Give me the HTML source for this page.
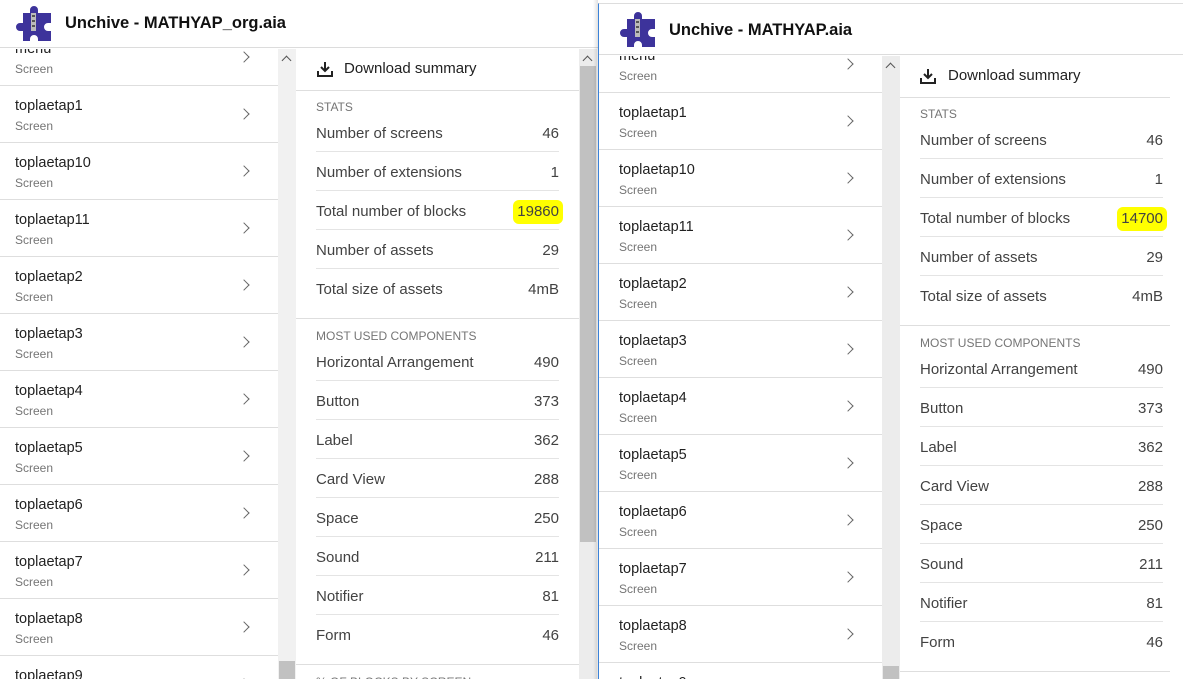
<!DOCTYPE html>
<html><head><meta charset="utf-8"><style>
*{margin:0;padding:0;box-sizing:border-box}
body{width:1183px;height:679px;overflow:hidden;background:#fff;font-family:"Liberation Sans",Roboto,sans-serif;position:relative}
.win{position:absolute;background:#fff;overflow:hidden}
.hdr{position:absolute;left:0;top:0;right:0;height:48px;border-bottom:1px solid #dcdcdc;background:#fff}
.hdr .t{position:absolute;left:65px;top:14px;font-size:16.5px;font-weight:bold;color:#111}
.hdr svg{position:absolute;left:15px;top:4px}
.list{position:absolute;left:0;width:278px;top:49px;bottom:0;overflow:hidden}
.row{position:absolute;left:0;width:278px;height:57px;border-bottom:1px solid #dedede}
.row .a{position:absolute;left:15px;top:12px;font-size:14.5px;color:#212121}
.row .b{position:absolute;left:15px;top:33px;font-size:12px;color:#757575}
.row .c{position:absolute;left:240px;top:24px;width:8px;height:8px;border-right:1.6px solid #666;border-top:1.6px solid #666;transform:rotate(45deg)}
.sb{position:absolute;width:18px;background:#f1f1f1}
.sb .up{position:absolute;left:5px;top:8px;width:7px;height:7px;border-left:1.6px solid #555;border-top:1.6px solid #555;transform:rotate(45deg)}
.thumb{position:absolute;left:1px;right:1px;background:#c1c1c1}
.panel{position:absolute;left:296px;top:49px;width:283px;bottom:0;overflow:hidden}
.dl{position:absolute;left:0;right:0;top:0;height:42px;border-bottom:1px solid #dedede}
.dl span{position:absolute;left:48px;top:11px;font-size:15px;color:#212121}
.lab{position:absolute;left:20px;font-size:12px;color:#757575}
.sr{position:absolute;left:20px;width:243px;height:39px;border-bottom:1px solid #e4e4e4;font-size:15px;color:#424242}
.sr.l{border-bottom:none}
.sr > span{position:absolute;top:12px}
.sr > .v{right:0}
.sec{position:absolute;left:0;right:0;border-bottom:1px solid #dedede}
.hl{background:#ffff00;border-radius:6px;padding:3px 4px 4px;margin-right:-4px}
</style></head><body>

<!-- LEFT WINDOW -->
<div class="win" style="left:0;top:0;width:598px;height:679px">
 <div class="hdr">
  <svg width="40" height="40" viewBox="0 0 40 40"><path d="M2 9h13v-3a4 4 0 0 1 8 0v3h13v10h-3a4 4 0 0 0 0 8h3v10H23v-2a4 4 0 0 0-8 0v2H8V27H5a4 4 0 0 1 0-8h3V9z" fill="#3d339b"/><rect x="16" y="9" width="5" height="18" fill="#bbb"/><rect x="17" y="11" width="3" height="2" fill="#555"/><rect x="17" y="16" width="3" height="2" fill="#555"/><rect x="17" y="21" width="3" height="2" fill="#555"/></svg>
  <div class="t">Unchive - MATHYAP_org.aia</div>
 </div>
 <div class="list">
  <div class="row" style="top:-20px"><div class="a">menu</div><div class="b">Screen</div><div class="c"></div></div>
  <div class="row" style="top:37px"><div class="a">toplaetap1</div><div class="b">Screen</div><div class="c"></div></div>
  <div class="row" style="top:94px"><div class="a">toplaetap10</div><div class="b">Screen</div><div class="c"></div></div>
  <div class="row" style="top:151px"><div class="a">toplaetap11</div><div class="b">Screen</div><div class="c"></div></div>
  <div class="row" style="top:208px"><div class="a">toplaetap2</div><div class="b">Screen</div><div class="c"></div></div>
  <div class="row" style="top:265px"><div class="a">toplaetap3</div><div class="b">Screen</div><div class="c"></div></div>
  <div class="row" style="top:322px"><div class="a">toplaetap4</div><div class="b">Screen</div><div class="c"></div></div>
  <div class="row" style="top:379px"><div class="a">toplaetap5</div><div class="b">Screen</div><div class="c"></div></div>
  <div class="row" style="top:436px"><div class="a">toplaetap6</div><div class="b">Screen</div><div class="c"></div></div>
  <div class="row" style="top:493px"><div class="a">toplaetap7</div><div class="b">Screen</div><div class="c"></div></div>
  <div class="row" style="top:550px"><div class="a">toplaetap8</div><div class="b">Screen</div><div class="c"></div></div>
  <div class="row" style="top:607px"><div class="a">toplaetap9</div><div class="b">Screen</div><div class="c"></div></div>
 </div>
 <div class="sb" style="left:278px;top:49px;height:630px"><div class="up"></div><div class="thumb" style="top:612px;height:20px"></div></div>
 <div class="panel">
  <div class="dl"><svg style="position:absolute;left:21px;top:12px" width="16" height="16" viewBox="0 0 16 16"><path d="M8 1v9M4 6l4 4 4-4M1 10v5h14v-5" fill="none" stroke="#222" stroke-width="2"/></svg><span>Download summary</span></div>
  <div class="lab" style="top:51px">STATS</div>
  <div class="sr" style="top:64px"><span>Number of screens</span><span class="v">46</span></div>
  <div class="sr" style="top:103px"><span>Number of extensions</span><span class="v">1</span></div>
  <div class="sr" style="top:142px"><span>Total number of blocks</span><span class="v"><span class="hl">19860</span></span></div>
  <div class="sr" style="top:181px"><span>Number of assets</span><span class="v">29</span></div>
  <div class="sr l" style="top:220px"><span>Total size of assets</span><span class="v">4mB</span></div>
  <div class="sec" style="top:269px"></div>
  <div class="lab" style="top:280px">MOST USED COMPONENTS</div>
  <div class="sr" style="top:293px"><span>Horizontal Arrangement</span><span class="v">490</span></div>
  <div class="sr" style="top:332px"><span>Button</span><span class="v">373</span></div>
  <div class="sr" style="top:371px"><span>Label</span><span class="v">362</span></div>
  <div class="sr" style="top:410px"><span>Card View</span><span class="v">288</span></div>
  <div class="sr" style="top:449px"><span>Space</span><span class="v">250</span></div>
  <div class="sr" style="top:488px"><span>Sound</span><span class="v">211</span></div>
  <div class="sr" style="top:527px"><span>Notifier</span><span class="v">81</span></div>
  <div class="sr l" style="top:566px"><span>Form</span><span class="v">46</span></div>
  <div class="sec" style="top:615px"></div>
  <div class="lab" style="top:626px">% OF BLOCKS BY SCREEN</div>
 </div>
 <div class="sb" style="left:579px;top:49px;height:630px;background:#ececec"><div class="up"></div><div class="thumb" style="top:17px;height:476px"></div></div>
</div>
<div style="position:absolute;left:593px;top:0;width:5px;height:679px;background:linear-gradient(90deg,rgba(0,0,0,0),rgba(0,0,0,.12))"></div>

<!-- RIGHT WINDOW -->
<div class="win" style="left:598px;top:3px;width:585px;height:676px;border-left:1px solid #3b82d8;border-top:1px solid #ddd">
 <div style="position:absolute;left:0;top:0;width:584px;height:676px">
 <div class="hdr" style="height:51px"><svg style="left:20px;top:6px" width="40" height="40" viewBox="0 0 40 40"><path d="M2 9h13v-3a4 4 0 0 1 8 0v3h13v10h-3a4 4 0 0 0 0 8h3v10H23v-2a4 4 0 0 0-8 0v2H8V27H5a4 4 0 0 1 0-8h3V9z" fill="#3d339b"/><rect x="16" y="9" width="5" height="18" fill="#bbb"/><rect x="17" y="11" width="3" height="2" fill="#555"/><rect x="17" y="16" width="3" height="2" fill="#555"/><rect x="17" y="21" width="3" height="2" fill="#555"/></svg>
  <div class="t" style="left:70px;top:17px">Unchive - MATHYAP.aia</div></div>
 <div class="list" style="top:52px;left:0;width:283px">
  <div class="row" style="top:-20px;width:283px"><div class="a" style="left:20px">menu</div><div class="b" style="left:20px">Screen</div><div class="c" style="left:245px"></div></div>
  <div class="row" style="top:37px;width:283px"><div class="a" style="left:20px">toplaetap1</div><div class="b" style="left:20px">Screen</div><div class="c" style="left:245px"></div></div>
  <div class="row" style="top:94px;width:283px"><div class="a" style="left:20px">toplaetap10</div><div class="b" style="left:20px">Screen</div><div class="c" style="left:245px"></div></div>
  <div class="row" style="top:151px;width:283px"><div class="a" style="left:20px">toplaetap11</div><div class="b" style="left:20px">Screen</div><div class="c" style="left:245px"></div></div>
  <div class="row" style="top:208px;width:283px"><div class="a" style="left:20px">toplaetap2</div><div class="b" style="left:20px">Screen</div><div class="c" style="left:245px"></div></div>
  <div class="row" style="top:265px;width:283px"><div class="a" style="left:20px">toplaetap3</div><div class="b" style="left:20px">Screen</div><div class="c" style="left:245px"></div></div>
  <div class="row" style="top:322px;width:283px"><div class="a" style="left:20px">toplaetap4</div><div class="b" style="left:20px">Screen</div><div class="c" style="left:245px"></div></div>
  <div class="row" style="top:379px;width:283px"><div class="a" style="left:20px">toplaetap5</div><div class="b" style="left:20px">Screen</div><div class="c" style="left:245px"></div></div>
  <div class="row" style="top:436px;width:283px"><div class="a" style="left:20px">toplaetap6</div><div class="b" style="left:20px">Screen</div><div class="c" style="left:245px"></div></div>
  <div class="row" style="top:493px;width:283px"><div class="a" style="left:20px">toplaetap7</div><div class="b" style="left:20px">Screen</div><div class="c" style="left:245px"></div></div>
  <div class="row" style="top:550px;width:283px"><div class="a" style="left:20px">toplaetap8</div><div class="b" style="left:20px">Screen</div><div class="c" style="left:245px"></div></div>
  <div class="row" style="top:607px;width:283px"><div class="a" style="left:20px">toplaetap9</div><div class="b" style="left:20px">Screen</div><div class="c" style="left:245px"></div></div>
 </div>
 <div class="sb" style="left:283px;top:52px;height:630px;background:#ececec"><div class="up"></div><div class="thumb" style="top:610px;height:20px"></div></div>
 <div class="panel" style="left:301px;top:52px;width:283px">
  <div class="dl" style="right:13px"><svg style="position:absolute;left:20px;top:12px" width="16" height="16" viewBox="0 0 16 16"><path d="M8 1v9M4 6l4 4 4-4M1 10v5h14v-5" fill="none" stroke="#222" stroke-width="2"/></svg><span>Download summary</span></div>
  <div class="lab" style="top:51px">STATS</div>
  <div class="sr" style="top:64px"><span>Number of screens</span><span class="v">46</span></div>
  <div class="sr" style="top:103px"><span>Number of extensions</span><span class="v">1</span></div>
  <div class="sr" style="top:142px"><span>Total number of blocks</span><span class="v"><span class="hl">14700</span></span></div>
  <div class="sr" style="top:181px"><span>Number of assets</span><span class="v">29</span></div>
  <div class="sr l" style="top:220px"><span>Total size of assets</span><span class="v">4mB</span></div>
  <div class="sec" style="top:269px;right:13px"></div>
  <div class="lab" style="top:280px">MOST USED COMPONENTS</div>
  <div class="sr" style="top:293px"><span>Horizontal Arrangement</span><span class="v">490</span></div>
  <div class="sr" style="top:332px"><span>Button</span><span class="v">373</span></div>
  <div class="sr" style="top:371px"><span>Label</span><span class="v">362</span></div>
  <div class="sr" style="top:410px"><span>Card View</span><span class="v">288</span></div>
  <div class="sr" style="top:449px"><span>Space</span><span class="v">250</span></div>
  <div class="sr" style="top:488px"><span>Sound</span><span class="v">211</span></div>
  <div class="sr" style="top:527px"><span>Notifier</span><span class="v">81</span></div>
  <div class="sr l" style="top:566px"><span>Form</span><span class="v">46</span></div>
  <div class="sec" style="top:615px;right:13px"></div>
 </div>
 </div>
</div>
</body></html>
